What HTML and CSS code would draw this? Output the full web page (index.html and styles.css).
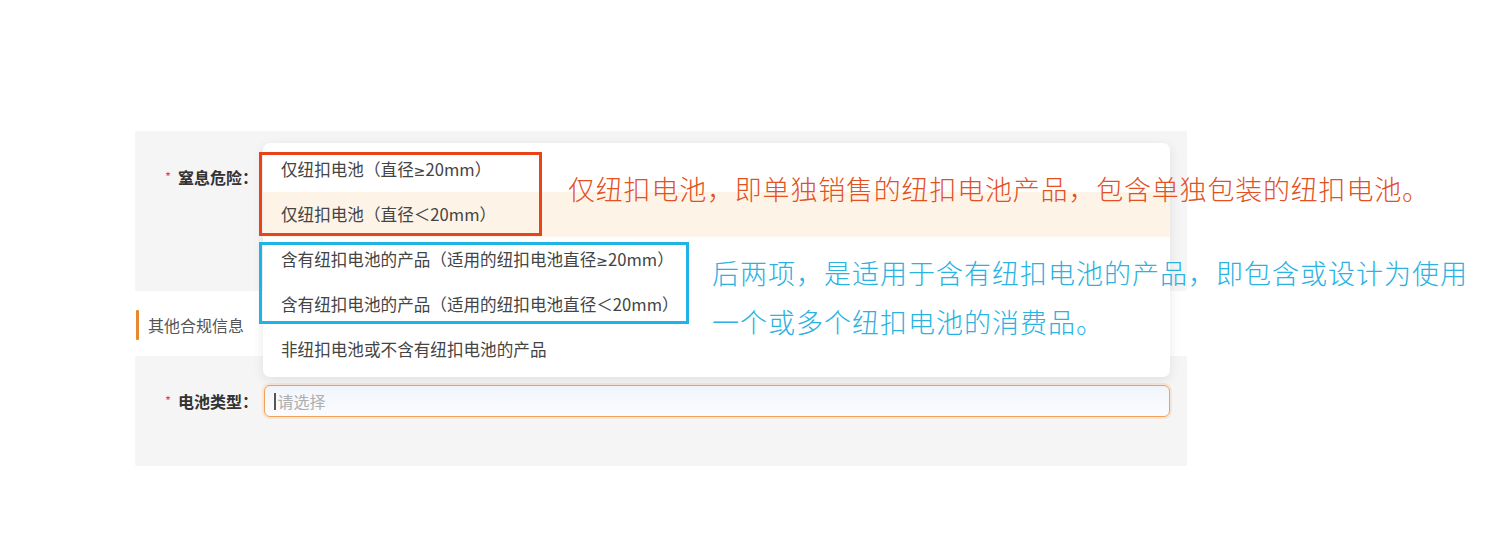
FILE: index.html
```html
<!DOCTYPE html>
<html lang="zh">
<head>
<meta charset="utf-8">
<title>窒息危险</title>
<link rel="stylesheet" href="styles.css">
</head>
<body>
<div class="page">
  <section class="card card-top">
    <div class="form-row row-hazard">
      <label class="label"><span class="req">*</span>窒息危险：</label>
      <div class="field"></div>
    </div>
  </section>
  <div class="section-title"><span class="bar"></span><span class="title-text">其他合规信息</span></div>
  <section class="card card-bottom">
    <div class="form-row row-battery">
      <label class="label"><span class="req">*</span>电池类型：</label>
      <div class="field">
        <div class="input"><span class="caret"></span><span class="placeholder">请选择</span></div>
      </div>
    </div>
  </section>

  <ul class="dropdown">
    <li class="option">仅纽扣电池（直径<span class="sym">≥</span>20mm）</li>
    <li class="option active">仅纽扣电池（直径＜20mm）</li>
    <li class="option">含有纽扣电池的产品（适用的纽扣电池直径<span class="sym">≥</span>20mm）</li>
    <li class="option">含有纽扣电池的产品（适用的纽扣电池直径＜20mm）</li>
    <li class="option">非纽扣电池或不含有纽扣电池的产品</li>
  </ul>

  <div class="mark mark-red"></div>
  <div class="mark mark-blue"></div>
  <p class="note note-red">仅纽扣电池，即单独销售的纽扣电池产品，包含单独包装的纽扣电池。</p>
  <p class="note note-blue">后两项，是适用于含有纽扣电池的产品，即包含或设计为使用<br>一个或多个纽扣电池的消费品。</p>
</div>
</body>
</html>
```
FILE: styles.css
```css
* { box-sizing: border-box; }
html, body { margin: 0; padding: 0; background: #ffffff; }
body {
  font-family: "Noto Sans CJK SC", "Noto Sans", sans-serif;
  color: #333;
  width: 1487px;
  height: 550px;
  overflow: hidden;
}
.page {
  position: relative;
  padding: 131px 0 0 135px;
  width: 1487px;
  height: 550px;
}
.card {
  width: 1052px;
  background: #f5f5f6;
  border-radius: 2px;
}
.card-top { height: 160px; padding-top: 30px; }
.card-bottom { height: 110px; padding-top: 29px; }
.form-row {
  display: flex;
  align-items: center;
  height: 32px;
}
.label {
  width: 129px;
  padding-right: 6px;
  text-align: right;
  font-size: 16px;
  font-weight: 600;
  color: #333;
  white-space: nowrap;
}
.req {
  color: #e4464a;
  font-size: 13px;
  font-weight: 400;
  margin-right: 7px;
  position: relative;
  top: -2px;
}
.field { flex: 0 0 906px; }
.input {
  height: 32px;
  border: 1.5px solid #f0a25c;
  border-radius: 6px;
  background: linear-gradient(#f1f5fb, #fbfcfe);
  box-shadow: 0 0 0 2px rgba(245, 170, 100, 0.2);
  display: flex;
  align-items: center;
  padding-left: 9px;
}
.caret {
  width: 1.5px;
  height: 17px;
  background: #555;
  margin-right: 2px;
}
.placeholder { font-size: 16px; color: #aeaeae; }

.section-title {
  height: 65px;
  display: flex;
  align-items: center;
  padding-top: 2px;
}
.bar {
  width: 3px;
  height: 30px;
  background: #e8892f;
  margin-left: 1px;
  border-radius: 1px;
}
.title-text {
  margin-left: 9px;
  font-size: 16px;
  color: #555;
}

.dropdown {
  position: absolute;
  left: 263px;
  top: 143px;
  width: 907px;
  height: 234px;
  margin: 0;
  padding: 4px 0 0;
  list-style: none;
  background: #ffffff;
  border-radius: 7px;
  box-shadow: 0 3px 12px rgba(0, 0, 0, 0.09);
}
.option {
  height: 45px;
  line-height: 45px;
  padding-left: 18px;
  font-size: 16.6px;
  color: #444;
  white-space: nowrap;
}
.option.active { background: #fdf4e7; }
.sym { font-family: "DejaVu Sans", sans-serif; font-size: 14px; }

.mark {
  position: absolute;
  border-style: solid;
  border-width: 3px;
}
.mark-red {
  left: 259px;
  top: 152px;
  width: 283px;
  height: 84px;
  border-color: #e8441a;
}
.mark-blue {
  left: 259px;
  top: 242px;
  width: 430px;
  height: 82px;
  border-color: #1fb3e6;
}
.note {
  position: absolute;
  margin: 0;
  font-size: 27px;
  font-weight: 300;
  white-space: nowrap;
}
.note-red {
  left: 568px;
  top: 170px;
  line-height: 38px;
  letter-spacing: 0.8px;
  color: #e2511f;
}
.note-blue {
  left: 712px;
  top: 248px;
  line-height: 49px;
  letter-spacing: 1px;
  color: #29b2e2;
}
```
